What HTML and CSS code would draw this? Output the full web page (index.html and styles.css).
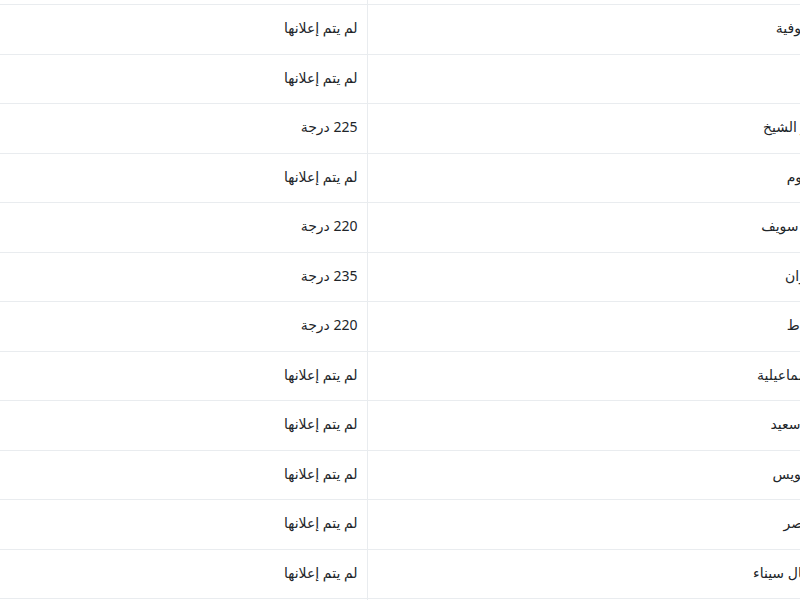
FILE: index.html
```html
<!DOCTYPE html>
<html lang="ar">
<head>
<meta charset="utf-8">
<link rel="stylesheet" href="styles.css">
</head>
<body>
<div class="page">
<table class="scores" dir="rtl">
<colgroup><col class="c-gov"><col class="c-val"></colgroup>
<tbody>
<tr><td class="gov">البحيرة</td><td class="val">لم يتم إعلانها</td></tr>
<tr><td class="gov">المنوفية</td><td class="val">لم يتم إعلانها</td></tr>
<tr><td class="gov">قنا</td><td class="val">لم يتم إعلانها</td></tr>
<tr><td class="gov">كفر الشيخ</td><td class="val">225 درجة</td></tr>
<tr><td class="gov">الفيوم</td><td class="val">لم يتم إعلانها</td></tr>
<tr><td class="gov">بني سويف</td><td class="val">220 درجة</td></tr>
<tr><td class="gov">أسوان</td><td class="val">235 درجة</td></tr>
<tr><td class="gov">دمياط</td><td class="val">220 درجة</td></tr>
<tr><td class="gov">الإسماعيلية</td><td class="val">لم يتم إعلانها</td></tr>
<tr><td class="gov">بور سعيد</td><td class="val">لم يتم إعلانها</td></tr>
<tr><td class="gov">السويس</td><td class="val">لم يتم إعلانها</td></tr>
<tr><td class="gov">الأقصر</td><td class="val">لم يتم إعلانها</td></tr>
<tr><td class="gov">شمال سيناء</td><td class="val">لم يتم إعلانها</td></tr>
<tr><td class="gov">جنوب سيناء</td><td class="val">لم يتم إعلانها</td></tr>
</tbody>
</table>
</div>
</body>
</html>
```
FILE: styles.css
```css
html {
  overflow: hidden;
}
body {
  margin: 0;
  background: #fff;
  font-family: "Noto Sans", "DejaVu Sans", sans-serif;
  color: #212529;
}
.page {
  width: 840px;
  margin-top: -45.5px;
}
.scores {
  width: 840px;
  table-layout: fixed;
  border-collapse: collapse;
  font-size: 14px;
}
.c-gov {
  width: 473px;
}
.c-val {
  width: 367px;
}
.scores td {
  height: 45.5px;
  padding: 0 9px 3px;
  border-top: 1px solid #e9ecef;
  border-bottom: 1px solid #e9ecef;
  text-align: right;
  vertical-align: middle;
}
.scores td.gov {
  padding-right: 18px;
  border-left: 1px solid #e9ecef;
}
```
